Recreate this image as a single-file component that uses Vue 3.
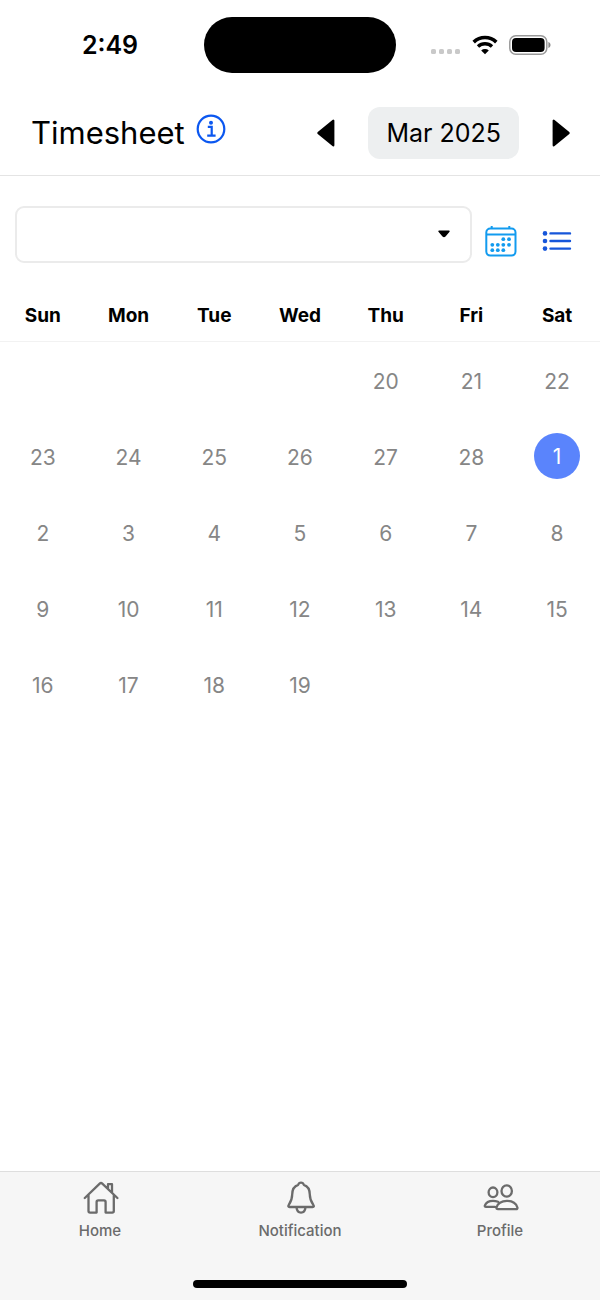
<script setup>
import { ref } from 'vue'

const weekdays = ['Sun', 'Mon', 'Tue', 'Wed', 'Thu', 'Fri', 'Sat']
const weeks = [
  [null, null, null, null, 20, 21, 22],
  [23, 24, 25, 26, 27, 28, 1],
  [2, 3, 4, 5, 6, 7, 8],
  [9, 10, 11, 12, 13, 14, 15],
  [16, 17, 18, 19, null, null, null],
]
const selected = ref(1)
const project = ref('')
</script>

<template>
  <div class="screen">
    <div class="status">
      <div class="status-side"><span class="clock">2:49</span></div>
      <div class="island"></div>
      <div class="status-side indicators">
        <svg width="32" height="6" viewBox="0 0 32 6" fill="#c9c9c9">
          <rect x="1" y="0" width="5" height="5" rx="1.6" />
          <rect x="9" y="0" width="5" height="5" rx="1.6" />
          <rect x="17" y="0" width="5" height="5" rx="1.6" />
          <rect x="25" y="0" width="5" height="5" rx="1.6" />
        </svg>
        <svg class="wifi" width="26" height="20" viewBox="0 0 26 20" fill="none" stroke="#000">
          <path d="M1.7 7.1A16.3 16.3 0 0 1 24.3 7.1" stroke-width="3.6" />
          <path d="M6 11.6A10.2 10.2 0 0 1 20 11.6" stroke-width="3.4" />
          <path d="M13 19.2L9.2 15.4A5.6 5.6 0 0 1 16.8 15.4Z" fill="#000" stroke="none" />
        </svg>
        <svg class="battery" width="42" height="20" viewBox="0 0 42 20">
          <rect x="0.8" y="0.8" width="37" height="18.4" rx="6" fill="none" stroke="#999" stroke-width="1.5" />
          <rect x="3" y="3" width="32.6" height="14" rx="4" fill="#000" />
          <path d="M39.4 7V13C42.2 12 42.2 8 39.4 7Z" fill="#888" />
        </svg>
      </div>
    </div>

    <header class="header">
      <h1>Timesheet</h1>
      <button class="plain info" aria-label="Information">
        <svg width="30" height="30" viewBox="0 0 30 30" fill="none" stroke="#0b57f0">
          <circle cx="15" cy="15" r="13.3" stroke-width="2.2" />
          <circle cx="15" cy="8.8" r="2" fill="#0b57f0" stroke="none" />
          <path d="M11.8 12.9H15.7V21.5M11.2 21.6H19.6" stroke-width="2.2" />
        </svg>
      </button>
      <nav class="months" aria-label="Month">
        <button class="plain" aria-label="Previous month">
          <svg width="18" height="28" viewBox="0 0 18 28">
            <path d="M1.5 14L16.2 1.8V26.2Z" stroke="#000" stroke-width="2.4" stroke-linejoin="round" />
          </svg>
        </button>
        <button class="month">Mar 2025</button>
        <button class="plain" aria-label="Next month">
          <svg width="18" height="28" viewBox="0 0 18 28">
            <path d="M16.5 14L1.8 1.8V26.2Z" stroke="#000" stroke-width="2.4" stroke-linejoin="round" />
          </svg>
        </button>
      </nav>
    </header>

    <main class="main">
      <div class="toolbar">
        <div class="picker">
          <select v-model="project" aria-label="Project">
            <option value=""></option>
          </select>
          <svg class="caret" width="14" height="8" viewBox="0 0 14 8">
            <path d="M2 1.2H12L8 6Q7 7 6 6Z" stroke="#000" stroke-width="1.4" stroke-linejoin="round" />
          </svg>
        </div>
        <button class="plain" aria-label="Calendar view">
          <svg width="32" height="32" viewBox="0 0 32 32" fill="none" stroke="#129bef" stroke-width="2">
            <rect x="1.3" y="3.6" width="29.2" height="27" rx="4" />
            <path d="M1.3 9.6H30.5M6.7 1V4M24.3 1V4" />
            <g fill="#129bef" stroke="none">
              <circle cx="18.3" cy="14.2" r="1.9" /><circle cx="24" cy="14.2" r="1.9" />
              <circle cx="7.3" cy="19.8" r="1.9" /><circle cx="12.8" cy="19.8" r="1.9" />
              <circle cx="18.3" cy="19.8" r="1.9" /><circle cx="24" cy="19.8" r="1.9" />
              <circle cx="7.3" cy="25.2" r="1.9" /><circle cx="12.8" cy="25.2" r="1.9" />
              <circle cx="18.3" cy="25.2" r="1.9" />
            </g>
          </svg>
        </button>
        <button class="plain list" aria-label="List view">
          <svg width="30" height="20" viewBox="0 0 30 20" fill="#1656da" stroke="#1656da">
            <g stroke="none">
              <circle cx="3" cy="2.4" r="2.3" /><circle cx="3" cy="10" r="2.3" /><circle cx="3" cy="17.6" r="2.3" />
            </g>
            <path d="M8.5 2.4H28M8.5 10H28M8.5 17.6H28" stroke-width="2.4" stroke-linecap="round" />
          </svg>
        </button>
      </div>

      <table class="calendar">
        <thead>
          <tr><th v-for="d in weekdays" :key="d" scope="col">{{ d }}</th></tr>
        </thead>
        <tbody>
          <tr v-for="(week, i) in weeks" :key="i">
            <td v-for="(day, j) in week" :key="j">
              <button v-if="day" class="day" :class="{ selected: day === selected }" @click="selected = day">{{ day }}</button>
            </td>
          </tr>
        </tbody>
      </table>
    </main>

    <footer class="footer">
      <nav class="tabs" aria-label="Main">
        <a href="#home">
          <svg width="38" height="36" viewBox="0 0 38 36">
            <path d="M3.8 18L18.7 3.6Q20 2.4 21.3 3.6L36.4 18M7.5 15V31Q7.5 32.6 9.1 32.6H15.6V22Q15.6 20.4 17.2 20.4H23Q24.6 20.4 24.6 22V32.6H31.2Q32.8 32.6 32.8 31V15M27 8.5V4.2H31V12.5" />
          </svg>
          Home
        </a>
        <a href="#notification">
          <svg width="38" height="36" viewBox="0 0 38 36">
            <path d="M20 2.6C18.4 2.6 17.6 3.4 17.2 4.8C12.4 6.3 11.2 10.6 11.2 14.5C11.2 19.6 9.6 22.2 7.8 24.8C6.9 26.2 7.2 27 8.6 27H31.6C33 27 33.3 26.2 32.3 24.8C30.4 22.2 28.8 19.6 28.8 14.5C28.8 10.6 27.6 6.3 22.8 4.8C22.4 3.4 21.6 2.6 20 2.6ZM15.5 27.4C15.8 30.6 17.4 32.6 20 32.6S24.2 30.6 24.5 27.4" />
          </svg>
          Notification
        </a>
        <a href="#profile">
          <svg width="38" height="36" viewBox="0 0 38 36">
            <ellipse cx="12" cy="12.3" rx="4.4" ry="4.8" />
            <ellipse cx="25.7" cy="11" rx="5.2" ry="5.7" />
            <path d="M17 29.2Q15.2 29.2 15.5 27.5C16.2 23.6 20.5 20.8 26 20.8S35.7 23.6 36.4 27.5Q36.7 29.2 35 29.2ZM14 26.8H5Q3.5 26.8 3.9 25.4C5 22.5 8.3 20.8 12 20.8Q14.8 20.8 17 21.8" />
          </svg>
          Profile
        </a>
      </nav>
      <div class="home-bar"></div>
    </footer>
  </div>
</template>

<style>
body {
  margin: 0;
}
</style>

<style scoped>
.screen {
  box-sizing: border-box;
  min-height: 100vh;
  display: flex;
  flex-direction: column;
  background: #fff;
  color: #000;
  font-family: Inter, "Liberation Sans", sans-serif;
}
svg {
  display: block;
}
button {
  font: inherit;
  color: inherit;
  border: 0;
  padding: 0;
  cursor: pointer;
}
.plain {
  background: none;
}
.status {
  display: flex;
  align-items: center;
  height: 90px;
}
.status-side {
  flex: 1;
  display: flex;
  align-items: center;
  justify-content: center;
}
.clock {
  margin-left: 16px;
  font-size: 25px;
  line-height: 32px;
  font-weight: 600;
}
.island {
  width: 192px;
  height: 56px;
  border-radius: 28px;
  background: #000;
}
.indicators {
  justify-content: flex-end;
  align-items: flex-end;
}
.wifi {
  margin: 0 11px 0 10px;
}
.battery {
  margin-right: 49px;
}
.header {
  display: flex;
  align-items: center;
  height: 85px;
  padding: 0 30px 0 31px;
  border-bottom: 1px solid #e4e4e4;
}
h1 {
  margin: 0;
  font-size: 31px;
  line-height: 40px;
  font-weight: 400;
}
.info {
  margin: 0 0 8px 11px;
}
.months {
  display: flex;
  align-items: center;
  gap: 33px;
  margin-left: auto;
}
.month {
  height: 52px;
  padding: 0 18px;
  border-radius: 12px;
  background: #edeff0;
  font-size: 25px;
}
.main {
  flex: 1;
}
.toolbar {
  display: flex;
  align-items: center;
  padding: 30px 28px 0 15px;
}
.picker {
  position: relative;
  flex: 1;
  margin-right: 13px;
}
select {
  display: block;
  width: 100%;
  height: 57px;
  padding: 0 40px 0 16px;
  border: 2px solid #ebebeb;
  border-radius: 9px;
  appearance: none;
  background: #fff;
  font: inherit;
  font-size: 22px;
}
.caret {
  position: absolute;
  top: 24px;
  right: 21px;
  pointer-events: none;
}
.toolbar .plain {
  margin-top: 12px;
}
.toolbar .list {
  margin-left: 25px;
}
.calendar {
  width: 100%;
  margin-top: 26px;
  table-layout: fixed;
  border-collapse: collapse;
}
th {
  height: 52px;
  padding: 0;
  border-bottom: 1px solid #f2f2f2;
  font-size: 19px;
  font-weight: 700;
}
td {
  height: 76px;
  padding: 0;
}
.day {
  display: block;
  width: 46px;
  height: 46px;
  margin: 0 auto;
  padding-top: 3px;
  border-radius: 50%;
  background: none;
  color: #868686;
  font-size: 21px;
}
.selected {
  padding-top: 0;
  background: #5a84fc;
  color: #fff;
}
.footer {
  height: 128px;
  display: flex;
  flex-direction: column;
  justify-content: space-between;
  align-items: center;
  border-top: 1px solid #dedede;
  background: #f6f6f6;
}
.tabs {
  display: flex;
  width: 100%;
  padding-top: 8px;
}
.tabs a {
  flex: 1;
  display: flex;
  flex-direction: column;
  align-items: center;
  gap: 4px;
  color: #6b6b6b;
  font-size: 15px;
  line-height: 22px;
  font-weight: 500;
  text-decoration: none;
}
.tabs svg {
  fill: none;
  stroke: #6b6b6b;
  stroke-width: 2.3;
  stroke-linecap: round;
  stroke-linejoin: round;
}
.home-bar {
  width: 214px;
  height: 8px;
  margin-bottom: 12px;
  border-radius: 4px;
  background: #000;
}
</style>
